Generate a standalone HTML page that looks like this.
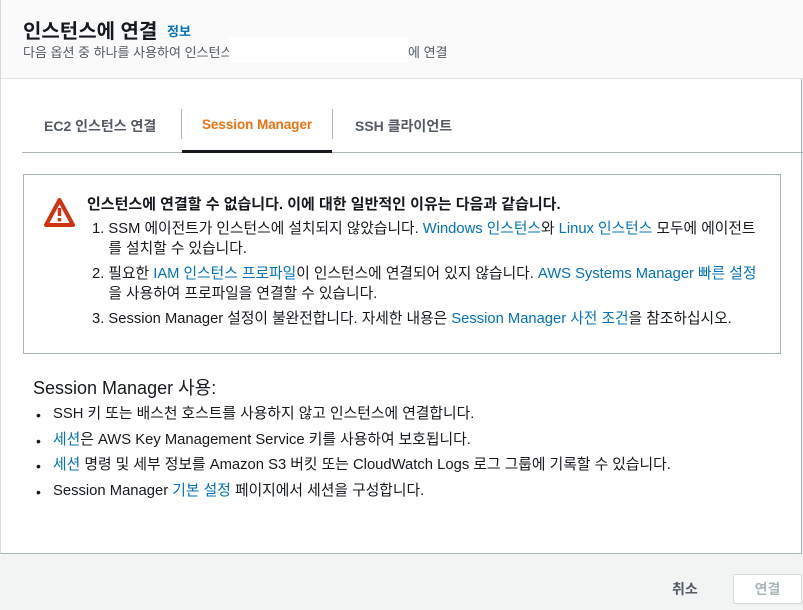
<!DOCTYPE html>
<html><head><meta charset="utf-8"><style>
*{margin:0;padding:0;box-sizing:border-box}
body{width:803px;height:610px;background:#f2f3f3;font-family:"Liberation Sans","Noto Sans CJK KR",sans-serif;color:#16191f;position:relative;overflow:hidden;font-size:14px}
.hdr{position:absolute;left:0;top:0;width:803px;height:79px;background:#fafafa;border-left:1px solid #d5dbdb;border-bottom:1px solid #e0e3e3}
.panel{position:absolute;left:0;top:79px;width:802px;height:475px;background:#fff;border-left:1px solid #d5dbdb;border-right:1px solid #aab7b8;border-bottom:1px solid #aab7b8}
a{color:#0073bb;text-decoration:none}
.abs{position:absolute;white-space:nowrap}
.b{font-size:15px}
.l{font-size:14.75px}
</style></head><body>
<div class="hdr"></div>
<div class="abs" style="left:23px;top:15px;font-size:20px;font-weight:bold">인스턴스에 연결</div>
<div class="abs" style="left:167px;top:21px;font-size:13px;color:#0073bb;font-weight:bold">정보</div>
<div class="abs" style="left:23px;top:42px;font-size:13px;color:#545b64">다음 옵션 중 하나를 사용하여 인스턴스</div>
<div class="abs" style="left:229px;top:38px;width:179px;height:24px;background:#fff"></div>
<div class="abs" style="left:408px;top:42px;font-size:13px;color:#545b64">에 연결</div>
<div class="panel"></div>
<div class="abs" style="left:22px;top:152px;width:781px;height:1px;background:#aab7b8"></div>
<div class="abs" style="left:181px;top:109px;width:1px;height:30px;background:#aab7b8"></div>
<div class="abs" style="left:332px;top:109px;width:1px;height:30px;background:#aab7b8"></div>
<div class="abs" style="left:182px;top:150px;width:150px;height:3px;background:#16191f"></div>
<div class="abs" style="left:44px;top:116px;font-weight:bold;color:#545b64">EC2 인스턴스 연결</div>
<div class="abs" style="left:202px;top:117px;font-weight:bold;color:#ec7211;font-size:13.4px">Session Manager</div>
<div class="abs" style="left:355px;top:116px;font-weight:bold;color:#545b64">SSH 클라이언트</div>
<div class="abs" style="left:23px;top:174px;width:758px;height:180px;border:1px solid #aab7b8"></div>
<svg class="abs" style="left:43px;top:197px" width="33" height="32" viewBox="0 0 33 32"><path d="M16.5 3 L30 28 L3 28 Z" fill="none" stroke="#d13212" stroke-width="4" stroke-linejoin="round"/><rect x="14.8" y="11" width="3.4" height="8" fill="#d13212"/><rect x="14.8" y="21" width="3.4" height="3.4" fill="#d13212"/></svg>
<div class="abs b" style="left:87px;top:193px;font-weight:bold">인스턴스에 연결할 수 없습니다. 이에 대한 일반적인 이유는 다음과 같습니다.</div>
<div class="abs l" style="left:92px;top:219px;line-height:20px">1. SSM 에이전트가 인스턴스에 설치되지 않았습니다. <a>Windows 인스턴스</a>와 <a>Linux 인스턴스</a> 모두에 에이전트<br>&nbsp;&nbsp;&nbsp;&nbsp;를 설치할 수 있습니다.</div>
<div class="abs l" style="left:92px;top:264px;line-height:20px">2. 필요한 <a>IAM 인스턴스 프로파일</a>이 인스턴스에 연결되어 있지 않습니다. <a>AWS Systems Manager 빠른 설정</a><br>&nbsp;&nbsp;&nbsp;&nbsp;을 사용하여 프로파일을 연결할 수 있습니다.</div>
<div class="abs l" style="left:92px;top:309px;line-height:20px">3. Session Manager 설정이 불완전합니다. 자세한 내용은 <a>Session Manager 사전 조건</a>을 참조하십시오.</div>
<div class="abs" style="left:33px;top:374px;font-size:18px">Session Manager 사용:</div>
<div class="abs" style="left:36px;top:403px;line-height:25.5px">•</div>
<div class="abs" style="left:36px;top:428.5px;line-height:25.5px">•</div>
<div class="abs" style="left:36px;top:454px;line-height:25.5px">•</div>
<div class="abs" style="left:36px;top:479.5px;line-height:25.5px">•</div>
<div class="abs" style="left:53px;top:402px;line-height:25.5px;font-size:14.8px">SSH 키 또는 배스천 호스트를 사용하지 않고 인스턴스에 연결합니다.<br><a>세션</a>은 AWS Key Management Service 키를 사용하여 보호됩니다.<br><a>세션</a> 명령 및 세부 정보를 Amazon S3 버킷 또는 CloudWatch Logs 로그 그룹에 기록할 수 있습니다.<br>Session Manager <a>기본 설정</a> 페이지에서 세션을 구성합니다.</div>
<div class="abs" style="left:672px;top:579px;font-weight:bold;color:#545b64">취소</div>
<div class="abs" style="left:733px;top:574px;width:69px;height:30px;background:#fff;border:1px solid #d5dbdb;border-radius:2px;text-align:center;line-height:28px;font-weight:bold;color:#aab7b8">연결</div>
</body></html>
